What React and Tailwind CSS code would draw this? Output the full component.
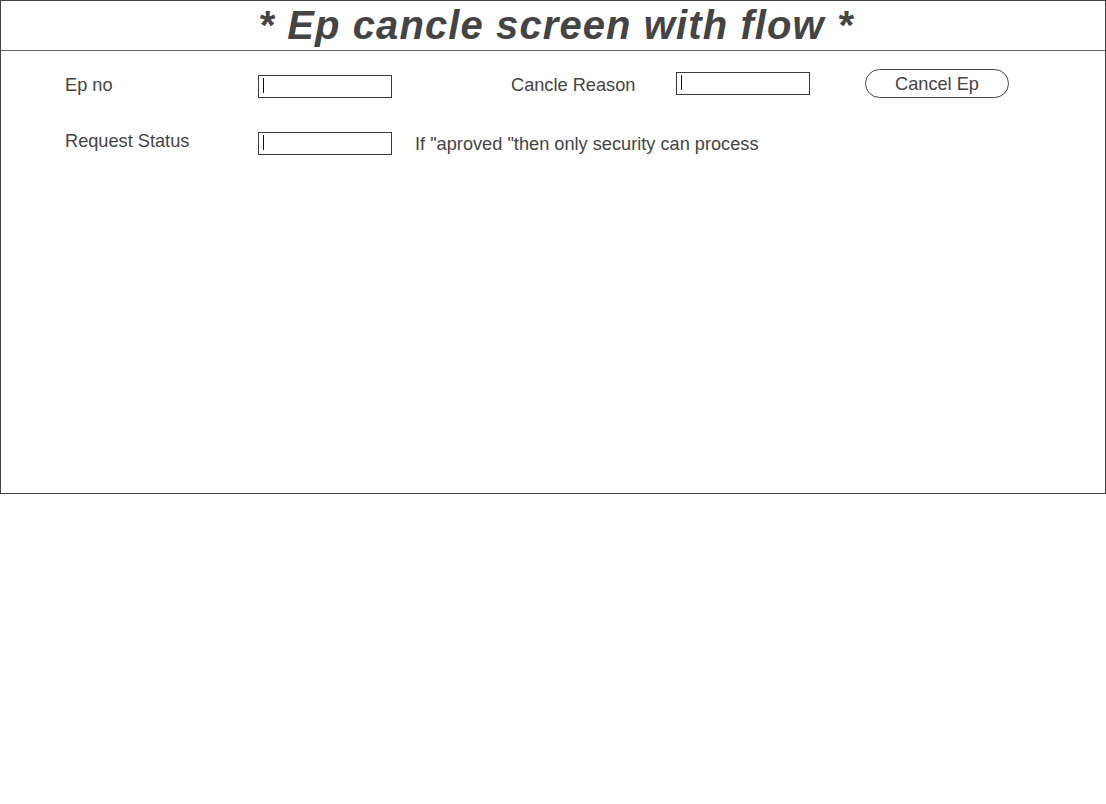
const font = { fontFamily: '"Liberation Sans", Arial, sans-serif' };

function Field({ className = "" }) {
  return (
    <div className={`w-[134px] h-[23px] border border-[#3a3a3a] bg-white flex items-start pl-[4px] pt-[2px] ${className}`}>
      <div className="w-px h-[15px] bg-[#111]" />
    </div>
  );
}

export default function App() {
  return (
    <div className="w-[1106px] min-h-[804px] bg-white text-[#444]" style={font}>
      <div className="w-[1106px] h-[494px] border border-[#444] flex flex-col">
        {/* Header */}
        <div className="h-[50px] border-b border-[#666] flex justify-center pt-[2px] pl-[6px]">
          <h1 className="text-[40px] leading-[45px] font-bold italic tracking-[1.1px] text-[#444]">
            * Ep cancle screen with flow *
          </h1>
        </div>

        {/* Row 1 */}
        <div className="flex items-start pl-[64px] mt-[18px] text-[18.2px] leading-[22px]">
          <div className="w-[193px] mt-[5px]">Ep no</div>
          <Field className="mt-[6px]" />
          <div className="w-[165px] ml-[119px] mt-[5px]">Cancle Reason</div>
          <Field className="mt-[3px]" />
          <button className="ml-[55px] w-[144px] h-[29px] border border-[#444] rounded-full flex items-center justify-center text-[#444]">
            Cancel Ep
          </button>
        </div>

        {/* Row 2 */}
        <div className="flex items-start pl-[64px] mt-[31px] text-[18.2px] leading-[22px]">
          <div className="w-[193px] mt-[1px]">Request Status</div>
          <Field className="mt-[3px]" />
          <div className="ml-[23px] mt-[4px]">If "aproved "then only security can process</div>
        </div>
      </div>
    </div>
  );
}
